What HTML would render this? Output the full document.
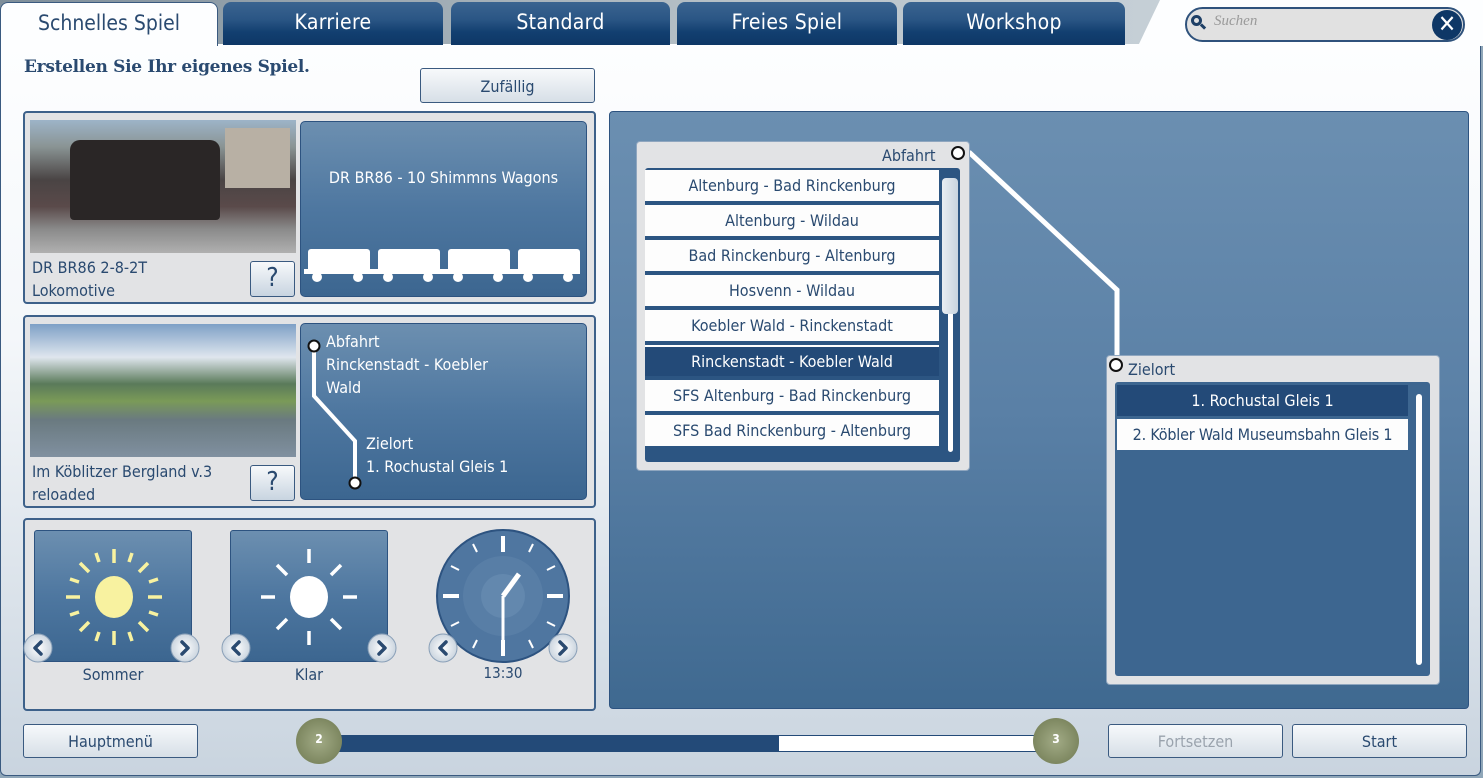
<!DOCTYPE html>
<html><head><meta charset="utf-8"><style>
*{margin:0;padding:0;box-sizing:border-box}
body{width:1483px;height:778px;overflow:hidden;font-family:"DejaVu Sans Condensed","DejaVu Sans","Liberation Sans",sans-serif;color:#2a4a70;position:relative;background:#8fa6b8}
.abs{position:absolute}
.main{left:0;top:44px;width:1481px;height:732px;background:linear-gradient(#fdfeff 0%,#f4f7fa 40%,#c9d4df 100%);border:1px solid #3a5a80;border-top:none;border-radius:0 0 6px 6px}
.tab{top:2px;height:43px;border-radius:8px 8px 0 0;background:linear-gradient(#3a6490 0%,#2b5685 40%,#123f70 70%,#0e3766 100%);color:#fff;font-size:21px;text-align:center;line-height:40px;letter-spacing:0.3px}
.btn{background:linear-gradient(#f7f9fb,#d7dfe7);border:1px solid #3a5a80;border-radius:3px;text-align:center;font-size:16px;color:#2a4a70}
.panel{background:#e2e3e5;border:2px solid #3d618a;border-radius:4px}
.blue{background:linear-gradient(#6c8fb0,#4e77a0 50%,#3c6690);border:1px solid #2d5380;border-radius:5px;color:#fff}
.row{background:#fdfdfd;color:#2a4a70;font-size:16px;text-align:center;height:31px;line-height:31px;white-space:nowrap}
.q{background:linear-gradient(#f7f9fb,#c8d4e0);border:1px solid #3a5a80;border-radius:3px;font-size:26px;text-align:center;line-height:32px;color:#2a4a70}
</style></head><body>
<div class="abs" style="left:0;top:0;width:1483px;height:46px;background:linear-gradient(90deg,#7e8e9a,#b8c2c8 50%,#d0dae2)"></div>
<div class="abs main"></div>
<div class="abs" style="left:1138px;top:0;width:345px;height:46px;background:#fdfeff;clip-path:polygon(22px 0,100% 0,100% 100%,0 100%)"></div>
<div class="abs" style="left:0;top:2px;width:218px;height:44px;background:#fdfeff;border:1px solid #3a5a80;border-bottom:none;border-radius:8px 8px 0 0;font-size:21px;text-align:center;line-height:40px;color:#2a4a70">Schnelles Spiel</div>
<div class="abs tab" style="left:223px;width:220px">Karriere</div>
<div class="abs tab" style="left:451px;width:219px">Standard</div>
<div class="abs tab" style="left:677px;width:220px">Freies Spiel</div>
<div class="abs tab" style="left:903px;width:222px">Workshop</div>
<div class="abs" style="left:1185px;top:7px;width:280px;height:35px;border:2px solid #2f527c;border-radius:18px;background:#e1e1e1"></div>
<div class="abs" style="left:1191px;top:15px;width:11px;height:11px;border:3px solid #1e3f66;border-radius:50%"></div>
<div class="abs" style="left:1200px;top:25px;width:6px;height:3px;background:#1e3f66;transform:rotate(45deg)"></div>
<div class="abs" style="left:1214px;top:13px;font-family:'Liberation Serif',serif;font-style:italic;font-size:15px;color:#9a9a9a">Suchen</div>
<div class="abs" style="left:1432px;top:10px;width:30px;height:30px;border-radius:50%;background:#0e3766;color:#fff;font-size:24px;font-weight:bold;text-align:center;line-height:29px">✕</div>
<div class="abs" style="left:24px;top:57px;font-family:'DejaVu Serif','Liberation Serif',serif;font-weight:bold;font-size:17px;color:#2a4a70;letter-spacing:-0.3px">Erstellen Sie Ihr eigenes Spiel.</div>
<div class="abs btn" style="left:420px;top:68px;width:175px;height:35px;line-height:36px">Zufällig</div>

<div class="abs panel" style="left:23px;top:111px;width:573px;height:193px"></div>
<div class="abs" style="left:30px;top:120px;width:266px;height:133px;background:linear-gradient(180deg,#9db4c8 0%,#8a9494 20%,#4a4444 45%,#5a4a4a 65%,#8a8a8a 82%,#b0b0b0 100%)"></div>
<div class="abs" style="left:70px;top:140px;width:150px;height:80px;background:#2a2626;border-radius:10px 10px 4px 4px"></div>
<div class="abs" style="left:225px;top:128px;width:65px;height:60px;background:#b8b0a4"></div>
<div class="abs" style="left:32px;top:256px;font-size:16px;line-height:23px">DR BR86 2-8-2T<br>Lokomotive</div>
<div class="abs q" style="left:250px;top:261px;width:45px;height:36px">?</div>
<div class="abs blue" style="left:300px;top:121px;width:287px;height:176px"></div>
<div class="abs" style="left:300px;top:168px;width:287px;text-align:center;color:#fff;font-size:16px">DR BR86 - 10 Shimmns Wagons</div>
<svg class="abs" style="left:300px;top:245px" width="287" height="40">
<g fill="#fff"><rect x="8" y="4" width="62" height="24" rx="3"/><rect x="78" y="4" width="62" height="24" rx="3"/><rect x="148" y="4" width="62" height="24" rx="3"/><rect x="218" y="4" width="62" height="24" rx="3"/>
<rect x="4" y="24" width="276" height="5"/>
<circle cx="17" cy="32" r="5"/><circle cx="58" cy="32" r="5"/><circle cx="88" cy="32" r="5"/><circle cx="128" cy="32" r="5"/><circle cx="158" cy="32" r="5"/><circle cx="198" cy="32" r="5"/><circle cx="228" cy="32" r="5"/><circle cx="268" cy="32" r="5"/></g></svg>

<div class="abs panel" style="left:23px;top:315px;width:573px;height:193px"></div>
<div class="abs" style="left:30px;top:324px;width:266px;height:133px;background:linear-gradient(180deg,#7ea0c6 0%,#dfe6ee 25%,#5a7a5a 45%,#7a9a58 58%,#6a7a80 72%,#8090a0 100%)"></div>
<div class="abs" style="left:32px;top:460px;font-size:16px;line-height:23px">Im Köblitzer Bergland v.3<br>reloaded</div>
<div class="abs q" style="left:250px;top:465px;width:45px;height:36px">?</div>
<div class="abs blue" style="left:300px;top:323px;width:287px;height:177px"></div>
<svg class="abs" style="left:300px;top:323px" width="100" height="177"><path d="M14 23 V73 L55 118 V160" stroke="#fff" stroke-width="4" fill="none"/><circle cx="14" cy="23" r="5.5" fill="#fff" stroke="#111" stroke-width="2"/><circle cx="55" cy="160" r="5.5" fill="#fff" stroke="#111" stroke-width="2"/></svg>
<div class="abs" style="left:326px;top:330px;color:#fff;font-size:16px;line-height:23px">Abfahrt<br>Rinckenstadt - Koebler<br>Wald</div>
<div class="abs" style="left:366px;top:432px;color:#fff;font-size:16px;line-height:23px">Zielort<br>1. Rochustal Gleis 1</div>

<div class="abs panel" style="left:23px;top:518px;width:573px;height:193px"></div>
<div class="abs blue" style="left:34px;top:530px;width:158px;height:132px;border-radius:3px"></div>
<svg class="abs" style="left:62px;top:545px" width="104" height="104"><g stroke="#f8f2a0" stroke-width="3.5"><line x1="52" y1="4" x2="52" y2="18"/><line x1="52" y1="86" x2="52" y2="100"/><line x1="4" y1="52" x2="18" y2="52"/><line x1="86" y1="52" x2="100" y2="52"/><line x1="18" y1="18" x2="27" y2="27"/><line x1="77" y1="77" x2="86" y2="86"/><line x1="86" y1="18" x2="77" y2="27"/><line x1="18" y1="86" x2="27" y2="77"/><line x1="34" y1="8" x2="37" y2="17"/><line x1="70" y1="8" x2="67" y2="17"/><line x1="34" y1="96" x2="37" y2="87"/><line x1="70" y1="96" x2="67" y2="87"/><line x1="8" y1="34" x2="17" y2="37"/><line x1="8" y1="70" x2="17" y2="67"/><line x1="96" y1="34" x2="87" y2="37"/><line x1="96" y1="70" x2="87" y2="67"/></g><ellipse cx="52" cy="52" rx="19" ry="21" fill="#f8f2a0"/></svg>
<div class="abs" style="left:34px;top:665px;width:158px;text-align:center;font-size:16px">Sommer</div>
<div class="abs blue" style="left:230px;top:530px;width:158px;height:132px;border-radius:3px"></div>
<svg class="abs" style="left:257px;top:545px" width="104" height="104"><g stroke="#fff" stroke-width="3.5"><line x1="52" y1="4" x2="52" y2="18"/><line x1="52" y1="86" x2="52" y2="100"/><line x1="4" y1="52" x2="18" y2="52"/><line x1="86" y1="52" x2="100" y2="52"/><line x1="20" y1="20" x2="30" y2="30"/><line x1="74" y1="74" x2="84" y2="84"/><line x1="84" y1="20" x2="74" y2="30"/><line x1="20" y1="84" x2="30" y2="74"/></g><ellipse cx="52" cy="52" rx="19" ry="21" fill="#fff"/></svg>
<div class="abs" style="left:230px;top:665px;width:158px;text-align:center;font-size:16px">Klar</div>
<svg class="abs" style="left:435px;top:528px" width="136" height="136"><circle cx="68" cy="68" r="66" fill="#4f76a0" stroke="#2d5380" stroke-width="2"/><circle cx="68" cy="68" r="40" fill="#587ea6"/><circle cx="68" cy="68" r="22" fill="#6388ae"/><g stroke="#fff" stroke-width="4"><line x1="68" y1="8" x2="68" y2="24"/><line x1="68" y1="112" x2="68" y2="128"/><line x1="8" y1="68" x2="24" y2="68"/><line x1="112" y1="68" x2="128" y2="68"/></g><g stroke="#fff" stroke-width="2"><line x1="98" y1="16" x2="94" y2="24"/><line x1="120" y1="38" x2="112" y2="42"/><line x1="120" y1="98" x2="112" y2="94"/><line x1="98" y1="120" x2="94" y2="112"/><line x1="38" y1="120" x2="42" y2="112"/><line x1="16" y1="98" x2="24" y2="94"/><line x1="16" y1="38" x2="24" y2="42"/><line x1="38" y1="16" x2="42" y2="24"/></g><line x1="68" y1="68" x2="84" y2="46" stroke="#fff" stroke-width="5"/><line x1="68" y1="68" x2="68" y2="126" stroke="#fff" stroke-width="3"/></svg>
<div class="abs" style="left:435px;top:664px;width:136px;text-align:center;font-size:15px">13:30</div>
<svg class="abs" style="left:0;top:0" width="600" height="700">
<defs><radialGradient id="g"><stop offset="0" stop-color="#fff"/><stop offset="1" stop-color="#cbd5df"/></radialGradient></defs>
<g fill="url(#g)" stroke="#8aa0b8"><circle cx="38" cy="648" r="14"/><circle cx="185" cy="648" r="14"/><circle cx="236" cy="648" r="14"/><circle cx="382" cy="648" r="14"/><circle cx="443" cy="648" r="14"/><circle cx="563" cy="648" r="14"/></g>
<g stroke="#2a4a70" stroke-width="3.5" fill="none" stroke-linecap="round" stroke-linejoin="round">
<path d="M41 642 L35 648 L41 654"/><path d="M182 642 L188 648 L182 654"/><path d="M239 642 L233 648 L239 654"/><path d="M379 642 L385 648 L379 654"/><path d="M446 642 L440 648 L446 654"/><path d="M560 642 L566 648 L560 654"/></g></svg>

<div class="abs" style="left:609px;top:111px;width:860px;height:598px;background:linear-gradient(#6b8fb1,#5a80a6 50%,#3f6990);border:1px solid #2d5380;border-radius:4px"></div>
<svg class="abs" style="left:940px;top:140px" width="200" height="240"><path d="M20 13 H30 L177 150 V225" stroke="#fff" stroke-width="5" fill="none"/></svg>
<div class="abs panel" style="left:636px;top:141px;width:334px;height:330px;border-width:1px;border-color:#8fa6bf"></div>
<div class="abs" style="left:882px;top:146px;font-size:16px">Abfahrt</div>
<svg class="abs" style="left:950px;top:145px" width="16" height="16"><circle cx="8" cy="8" r="6" fill="#fff" stroke="#111" stroke-width="2"/></svg>
<div class="abs" style="left:645px;top:168px;width:315px;height:294px;background:#2c5582;border-radius:3px"></div>
<div class="abs" style="left:645px;top:170px;width:294px">
<div class="row">Altenburg - Bad Rinckenburg</div><div style="height:4px"></div>
<div class="row">Altenburg - Wildau</div><div style="height:4px"></div>
<div class="row">Bad Rinckenburg - Altenburg</div><div style="height:4px"></div>
<div class="row">Hosvenn - Wildau</div><div style="height:4px"></div>
<div class="row">Koebler Wald - Rinckenstadt</div><div style="height:4px"></div>
<div class="row" style="background:#234a78;color:#fff;border-top:2px solid #fff;line-height:29px">Rinckenstadt - Koebler Wald</div><div style="height:4px"></div>
<div class="row">SFS Altenburg - Bad Rinckenburg</div><div style="height:4px"></div>
<div class="row">SFS Bad Rinckenburg - Altenburg</div>
</div>
<div class="abs" style="left:948px;top:178px;width:5px;height:274px;background:#fff;border-radius:3px"></div>
<div class="abs" style="left:942px;top:178px;width:16px;height:136px;background:linear-gradient(90deg,#e8edf2,#c8d4df);border-radius:4px"></div>

<div class="abs panel" style="left:1106px;top:355px;width:334px;height:330px;border-width:1px;border-color:#8fa6bf"></div>
<svg class="abs" style="left:1108px;top:357px" width="16" height="16"><circle cx="8" cy="8" r="6" fill="#fff" stroke="#111" stroke-width="2"/></svg>
<div class="abs" style="left:1128px;top:360px;font-size:16px">Zielort</div>
<div class="abs" style="left:1115px;top:382px;width:315px;height:294px;background:#3d6690;border-radius:3px"></div>
<div class="abs row" style="left:1117px;top:385px;width:291px;background:#234a78;color:#fff">1. Rochustal Gleis 1</div>
<div class="abs row" style="left:1117px;top:419px;width:291px;letter-spacing:-0.2px;overflow:hidden">2. Köbler Wald Museumsbahn Gleis 1</div>
<div class="abs" style="left:1416px;top:394px;width:6px;height:271px;background:#fff;border-radius:3px"></div>

<div class="abs btn" style="left:23px;top:724px;width:175px;height:34px;line-height:34px">Hauptmenü</div>
<div class="abs" style="left:318px;top:735px;width:460px;height:17px;background:#234a78"></div>
<div class="abs" style="left:778px;top:735px;width:278px;height:17px;background:#fff;border:1px solid #234a78"></div>
<div class="abs" style="left:296px;top:718px;width:46px;height:46px;border-radius:50%;background:radial-gradient(#a2ab86,#7d8760 70%);color:#fff;font-size:12px;font-weight:bold;text-align:center;line-height:42px">2</div>
<div class="abs" style="left:1033px;top:718px;width:46px;height:46px;border-radius:50%;background:radial-gradient(#a2ab86,#7d8760 70%);color:#fff;font-size:12px;font-weight:bold;text-align:center;line-height:42px">3</div>
<div class="abs btn" style="left:1108px;top:724px;width:175px;height:34px;line-height:34px;color:#9aa3ad">Fortsetzen</div>
<div class="abs btn" style="left:1292px;top:724px;width:175px;height:34px;line-height:34px">Start</div>
</body></html>
